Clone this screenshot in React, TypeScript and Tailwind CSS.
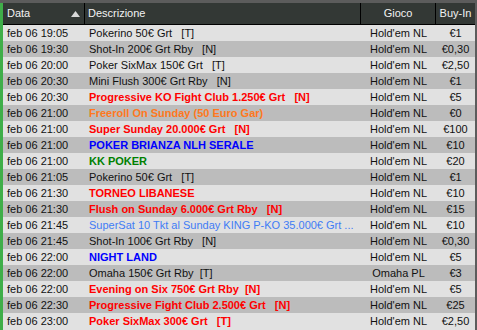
import React from 'react'

type Row = {
  date: string
  desc: string
  tone?: 'red' | 'orange' | 'blue' | 'green' | 'sky'
  game?: string
  buyIn: string
}

const rows: Row[] = [
  { date: 'feb 06 19:05', desc: 'Pokerino 50€ Grt   [T]', buyIn: '€1' },
  { date: 'feb 06 19:30', desc: 'Shot-In 200€ Grt Rby   [N]', buyIn: '€0,30' },
  { date: 'feb 06 20:00', desc: 'Poker SixMax 150€ Grt   [T]', buyIn: '€2,50' },
  { date: 'feb 06 20:30', desc: 'Mini Flush 300€ Grt Rby   [N]', buyIn: '€1' },
  { date: 'feb 06 20:30', desc: 'Progressive KO Fight Club 1.250€ Grt   [N]', tone: 'red', buyIn: '€5' },
  { date: 'feb 06 21:00', desc: 'Freeroll On Sunday (50 Euro Gar)', tone: 'orange', buyIn: '€0' },
  { date: 'feb 06 21:00', desc: 'Super Sunday 20.000€ Grt   [N]', tone: 'red', buyIn: '€100' },
  { date: 'feb 06 21:00', desc: 'POKER BRIANZA NLH SERALE', tone: 'blue', buyIn: '€10' },
  { date: 'feb 06 21:00', desc: 'KK POKER', tone: 'green', buyIn: '€20' },
  { date: 'feb 06 21:05', desc: 'Pokerino 50€ Grt   [T]', buyIn: '€1' },
  { date: 'feb 06 21:30', desc: 'TORNEO LIBANESE', tone: 'red', buyIn: '€10' },
  { date: 'feb 06 21:30', desc: 'Flush on Sunday 6.000€ Grt Rby   [N]', tone: 'red', buyIn: '€15' },
  { date: 'feb 06 21:45', desc: 'SuperSat 10 Tkt al Sunday KING P-KO 35.000€ Grt ...', tone: 'sky', buyIn: '€10' },
  { date: 'feb 06 21:45', desc: 'Shot-In 100€ Grt Rby   [N]', buyIn: '€0,30' },
  { date: 'feb 06 22:00', desc: 'NIGHT LAND', tone: 'blue', buyIn: '€5' },
  { date: 'feb 06 22:00', desc: 'Omaha 150€ Grt Rby  [T]', game: 'Omaha PL', buyIn: '€3' },
  { date: 'feb 06 22:00', desc: 'Evening on Six 750€ Grt Rby  [N]', tone: 'red', buyIn: '€5' },
  { date: 'feb 06 22:30', desc: 'Progressive Fight Club 2.500€ Grt   [N]', tone: 'red', buyIn: '€25' },
  { date: 'feb 06 23:00', desc: 'Poker SixMax 300€ Grt   [T]', tone: 'red', buyIn: '€2,50' },
]

const toneClass: Record<string, string> = {
  red: 'font-bold text-[#ff0000]',
  orange: 'font-bold text-[#ff7820]',
  blue: 'font-bold text-[#0000ff]',
  green: 'font-bold text-[#008000]',
  sky: 'text-[#3f7cf5]',
}

export default function App() {
  return (
    <div className="w-[477px] h-[330px] overflow-hidden bg-[#5c5c5c] pt-[3px] pr-[2px] font-['Liberation_Sans',Arial,sans-serif] text-[11px]">
      <div className="h-full border-l-[3px] border-[#3fae49] bg-[#e1e1e1]">
        {/* header */}
        <div className="grid grid-cols-[82px_276px_75px_1fr] h-[22px] bg-[#333835] border-b border-black text-[#f2f2f2] text-[11px] leading-[21px]">
          <div className="flex items-center justify-between pl-[4px] pr-[4px] border-r border-black">
            <span>Data</span>
            <svg width="9" height="6" viewBox="0 0 9 6" className="mr-[0px]">
              <path d="M4.5 0 L9 6 L0 6 Z" fill="#d8d8d8" />
            </svg>
          </div>
          <div className="pl-[3px] border-r border-black">Descrizione</div>
          <div className="text-center border-r border-black">Gioco</div>
          <div className="text-center">Buy-In</div>
        </div>
        {/* rows */}
        {rows.map((r, i) => (
          <div
            key={i}
            className={`grid grid-cols-[82px_276px_75px_1fr] h-[16px] leading-[16px] text-[#111] ${
              i % 2 === 0 ? 'bg-[#e1e1e1]' : 'bg-[#bcbcbc]'
            }`}
          >
            <div className="pl-[4px] whitespace-nowrap">{r.date}</div>
            <div className={`pl-[4px] whitespace-pre overflow-hidden ${r.tone ? toneClass[r.tone] : ''}`}>{r.desc}</div>
            <div className="text-center whitespace-nowrap">{r.game ?? "Hold'em NL"}</div>
            <div className="text-center whitespace-nowrap">{r.buyIn}</div>
          </div>
        ))}
      </div>
    </div>
  )
}
